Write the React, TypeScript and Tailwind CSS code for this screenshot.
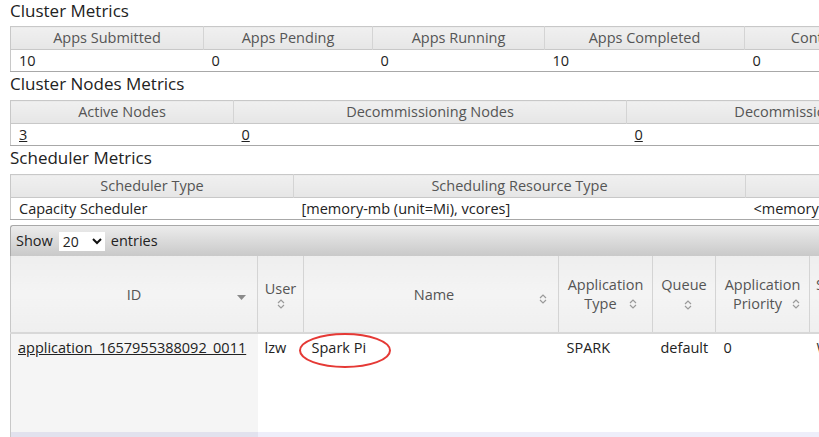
import React from 'react';

const font = { fontFamily: '"Open Sans", "Noto Sans", sans-serif' };

// small up/down sort chevrons used by DataTables headers
const SortBoth = () => (
  <svg width="8" height="12" viewBox="0 0 8 12" className="inline-block">
    <path d="M1 5 L4 2 L7 5" fill="none" stroke="#9a9a9a" strokeWidth="1.2" />
    <path d="M1 7 L4 10 L7 7" fill="none" stroke="#9a9a9a" strokeWidth="1.2" />
  </svg>
);

const SortDesc = () => (
  <svg width="9" height="6" viewBox="0 0 9 6" className="inline-block">
    <path d="M0 0 L9 0 L4.5 5 Z" fill="#8a8a8a" />
  </svg>
);

const thMetric = 'h-[22px] p-0 border-r border-[#d4d4d4] bg-gradient-to-b from-[#f0f0f0] to-[#e6e6e6] text-center font-normal text-[#555] text-[14.5px] leading-[22px] whitespace-nowrap overflow-hidden';
const tdMetric = 'h-[21px] px-2 py-0 text-left text-[14.5px] leading-[21px] text-[#222] whitespace-nowrap overflow-hidden';

function MetricsTable({ cols, heads, cells }: { cols: number[]; heads: string[]; cells: { v: string; link?: boolean }[] }) {
  return (
    <table className="table-fixed border-collapse border-l border-b border-t border-[#c8c8c8] border-b-[#a8a8a8]" style={{ width: cols.reduce((a, b) => a + b, 0) }}>
      <colgroup>
        {cols.map((w, i) => (
          <col key={i} style={{ width: w }} />
        ))}
      </colgroup>
      <thead>
        <tr className="border-b border-[#c8c8c8]">
          {heads.map((h, i) => (
            <th key={i} className={thMetric}>{h}</th>
          ))}
        </tr>
      </thead>
      <tbody>
        <tr className="bg-white">
          {cells.map((c, i) => (
            <td key={i} className={tdMetric}>
              {c.link ? <span className="underline">{c.v}</span> : c.v}
            </td>
          ))}
        </tr>
      </tbody>
    </table>
  );
}

const thApp = 'p-0 border-r border-[#d4d4d4] bg-gradient-to-b from-[#eeeeee] via-[#f4f4f4] to-[#efefef] font-normal text-[#555] text-[14.5px] leading-[19px] align-middle text-center';

export default function App() {
  return (
    <div className="w-[819px] h-[437px] overflow-hidden bg-white pl-[10px] relative" style={font}>
      <div className="w-[1400px]">
        <h3 className="text-[17px] leading-[22px] text-[#222] h-[26px]">Cluster Metrics</h3>
        <MetricsTable
          cols={[193, 169, 172, 200, 226, 300]}
          heads={['Apps Submitted', 'Apps Pending', 'Apps Running', 'Apps Completed', 'Containers Running', 'Used Resources']}
          cells={[{ v: '10' }, { v: '0' }, { v: '0' }, { v: '10' }, { v: '0' }, { v: '<memory:0, vCores:0>' }]}
        />
        <h3 className="text-[17px] leading-[23px] text-[#222] h-[28px]">Cluster Nodes Metrics</h3>
        <MetricsTable
          cols={[223, 393, 380, 300]}
          heads={['Active Nodes', 'Decommissioning Nodes', 'Decommissioned Nodes', 'Lost Nodes']}
          cells={[{ v: '3', link: true }, { v: '0', link: true }, { v: '0', link: true }, { v: '0', link: true }]}
        />
        <h3 className="text-[17px] leading-[24px] text-[#222] h-[28px]">Scheduler Metrics</h3>
        <MetricsTable
          cols={[283, 452, 300, 300]}
          heads={['Scheduler Type', 'Scheduling Resource Type', 'Minimum Allocation', 'Maximum Allocation']}
          cells={[{ v: 'Capacity Scheduler' }, { v: '[memory-mb (unit=Mi), vcores]' }, { v: '<memory:1024, vCores:1>' }, { v: '<memory:8192, vCores:4>' }]}
        />

        {/* DataTables toolbar */}
        <div className="mt-[5px] h-[31px] border-t border-l border-[#a8a8a8] rounded-tl-[3px] bg-gradient-to-b from-[#ececec] to-[#c9c9c9] flex items-center pl-[5px] gap-[6px] text-[14.5px] text-[#222]">
          <span>Show</span>
          <span className="bg-white h-[19px] w-[46px] flex items-center justify-between pl-[4px] pr-[3px] text-[14px]">
            <span>20</span>
            <svg width="10" height="7" viewBox="0 0 10 7">
              <path d="M1 1 L5 5 L9 1" fill="none" stroke="#111" strokeWidth="2" />
            </svg>
          </span>
          <span>entries</span>
        </div>

        <table className="table-fixed border-collapse border-l border-[#c8c8c8]" style={{ width: 1100 }}>
          <colgroup>
            <col style={{ width: 247 }} />
            <col style={{ width: 46 }} />
            <col style={{ width: 255 }} />
            <col style={{ width: 94 }} />
            <col style={{ width: 63 }} />
            <col style={{ width: 94 }} />
            <col style={{ width: 301 }} />
          </colgroup>
          <thead>
            <tr className="h-[77px] border-b-2 border-[#d8d8d8]">
              <th className={thApp}>
                <div className="relative flex items-center justify-center">
                  <span>ID</span>
                  <span className="absolute right-[11px] top-[2px]"><SortDesc /></span>
                </div>
              </th>
              <th className={thApp}>
                <div className="flex flex-col items-center">
                  <span>User</span>
                  <SortBoth />
                </div>
              </th>
              <th className={thApp}>
                <div className="relative flex items-center justify-center">
                  <span className="pl-[6px]">Name</span>
                  <span className="absolute right-[11px] top-[3px]"><SortBoth /></span>
                </div>
              </th>
              <th className={thApp}>
                <div className="flex flex-col items-center">
                  <span>Application</span>
                  <span className="flex items-center gap-[12px] pl-[10px]">Type <SortBoth /></span>
                </div>
              </th>
              <th className={thApp}>
                <div className="flex flex-col items-center">
                  <span>Queue</span>
                  <span className="pl-[8px]"><SortBoth /></span>
                </div>
              </th>
              <th className={thApp}>
                <div className="flex flex-col items-center">
                  <span>Application</span>
                  <span className="flex items-center gap-[10px] pl-[8px]">Priority <SortBoth /></span>
                </div>
              </th>
              <th className={thApp + ' text-left pl-[6px]'}>
                <div className="flex flex-col items-start">
                  <span>StartTime</span>
                  <span className="invisible">x</span>
                </div>
              </th>
            </tr>
          </thead>
          <tbody className="text-[14.5px] text-[#222]">
            <tr className="h-[99px] align-top">
              <td className="bg-[#f5f5f5] pl-[7px] pt-[3px] whitespace-nowrap">
                <span className="underline">application_1657955388092_0011</span>
              </td>
              <td className="bg-white pl-[7px] pt-[3px]">lzw</td>
              <td className="bg-white pl-[8px] pt-[3px] relative">
                Spark Pi
                <svg className="absolute left-[-6px] top-[-2px]" width="94" height="38" viewBox="0 0 94 38">
                  <ellipse cx="47" cy="18.5" rx="45" ry="16.5" fill="none" stroke="#e53935" strokeWidth="2" />
                </svg>
              </td>
              <td className="bg-white pl-[8px] pt-[3px]">SPARK</td>
              <td className="bg-white pl-[8px] pt-[3px]">default</td>
              <td className="bg-white pl-[8px] pt-[3px]">0</td>
              <td className="bg-white pl-[7px] pt-[3px] text-[#333]">Wed Jul 27 10:21:44 +0800 2022</td>
            </tr>
            <tr className="h-[30px]">
              <td className="bg-[#e2e2ee]"></td>
              <td className="bg-[#eeeefa]" colSpan={6}></td>
            </tr>
          </tbody>
        </table>
      </div>
    </div>
  );
}
